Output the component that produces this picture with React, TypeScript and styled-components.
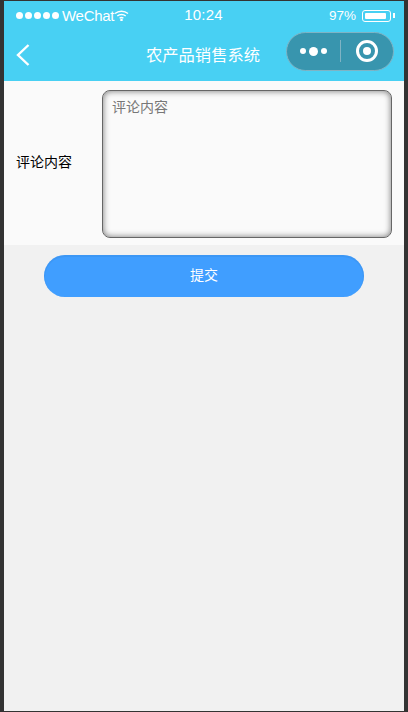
import styled, { createGlobalStyle } from 'styled-components';

const GlobalStyle = createGlobalStyle`
  html, body {
    margin: 0;
    padding: 0;
    height: 100%;
    background: #333333;
  }

  #root {
    height: 100%;
  }

  * {
    box-sizing: border-box;
  }
`;

const Frame = styled.div`
  width: 408px;
  height: 712px;
  padding: 1px 4px 1px 4px;
  background: #333333;
  font-family: "Liberation Sans", "Noto Sans CJK SC", sans-serif;
`;

const Phone = styled.div`
  height: 100%;
  display: flex;
  flex-direction: column;
  background: #f1f1f1;
`;

const Header = styled.div`
  height: 80px;
  background: #48d0f3;
  color: #fff;
  display: flex;
  flex-direction: column;
`;

const StatusBar = styled.div`
  height: 29px;
  padding: 0 9px 0 12px;
  display: flex;
  align-items: center;
  justify-content: space-between;
  font-size: 14px;
`;

const Side = styled.div`
  width: 130px;
  display: flex;
  align-items: center;
`;

const RightSide = styled(Side)`
  justify-content: flex-end;
  gap: 6px;
  padding-right: 4px;
`;

const Dots = styled.div`
  display: flex;
  gap: 2px;
  margin-right: 3px;
`;

const Dot = styled.span`
  width: 7px;
  height: 7px;
  border-radius: 50%;
  background: #fff;
`;

const Carrier = styled.span`
  font-size: 15px;
  letter-spacing: -0.3px;
`;

const Clock = styled.span`
  font-size: 15px;
  letter-spacing: 0.2px;
  margin: -2px 4px 0 0;
`;

const Percent = styled.span`
  font-size: 13.5px;
`;

const Battery = styled.div`
  width: 29px;
  height: 12px;
  padding: 2px;
  border: 1px solid #fff;
  border-radius: 3px;
  position: relative;

  &::before {
    content: '';
    display: block;
    height: 100%;
    width: 93%;
    background: #fff;
    border-radius: 1px;
  }

  &::after {
    content: '';
    position: absolute;
    top: 2px;
    right: -5px;
    width: 2px;
    height: 5px;
    background: #fff;
  }
`;

const NavBar = styled.div`
  flex: 1;
  padding: 0 10px 9px 12px;
  display: flex;
  align-items: center;
  justify-content: space-between;
  position: relative;
`;

const BackButton = styled.svg`
  width: 14px;
  height: 24px;
  margin-top: 8px;
`;

const Title = styled.div`
  position: absolute;
  left: 0;
  right: 0;
  margin-top: 6px;
  padding-right: 2px;
  text-align: center;
  font-size: 16.3px;
  font-weight: 400;
`;

const Capsule = styled.div`
  width: 108px;
  height: 39px;
  border-radius: 20px;
  background: #3895ae;
  border: 1px solid #7fb3c4;
  display: flex;
  align-items: center;
`;

const CapsuleHalf = styled.div`
  flex: 1;
  display: flex;
  align-items: center;
  justify-content: center;
  gap: 3px;
`;

const CapsuleDot = styled.span<{ $big?: boolean }>`
  width: ${(p) => (p.$big ? 9 : 6)}px;
  height: ${(p) => (p.$big ? 9 : 6)}px;
  border-radius: 50%;
  background: #fff;
`;

const CapsuleDivider = styled.span`
  width: 1px;
  height: 22px;
  margin-left: 1px;
  background: #7fb3c4;
`;

const Target = styled.div`
  width: 22px;
  height: 22px;
  border-radius: 50%;
  border: 3px solid #fff;
  display: flex;
  align-items: center;
  justify-content: center;

  &::after {
    content: '';
    width: 8px;
    height: 8px;
    border-radius: 50%;
    background: #fff;
  }
`;

const FormRow = styled.div`
  height: 164px;
  padding: 9px 12px 7px 12px;
  background: #fafafa;
  display: flex;
  align-items: center;
`;

const Label = styled.label`
  width: 86px;
  margin-bottom: 6px;
  font-size: 14px;
  color: #000;
`;

const Comment = styled.textarea`
  flex: 1;
  height: 148px;
  padding: 7px 9px;
  border: 1px solid #666;
  border-radius: 8px;
  background: #fafafa;
  box-shadow: inset 0 0 6px 0 rgba(0, 0, 0, 0.55);
  font-family: inherit;
  font-size: 14px;
  line-height: 18px;
  resize: none;
  outline: none;

  &::placeholder {
    color: #777;
    opacity: 1;
  }
`;

const SubmitButton = styled.button`
  display: block;
  width: 320px;
  height: 42px;
  margin: 10px 0 0 40px;
  padding: 0 0 4px;
  border: none;
  border-radius: 21px;
  background: #409eff;
  box-shadow: inset 0 1px 0 1px rgba(56, 140, 230, 0.4);
  color: #fff;
  font-family: inherit;
  font-size: 14px;
`;

export default function App() {
  return (
    <>
      <GlobalStyle />
      <Frame>
        <Phone>
          <Header>
            <StatusBar>
              <Side>
                <Dots>
                  <Dot />
                  <Dot />
                  <Dot />
                  <Dot />
                  <Dot />
                </Dots>
                <Carrier>WeChat</Carrier>
                <svg width="15" height="11" viewBox="0 0 15 11" fill="none" stroke="#fff" strokeWidth="1.4">
                  <path d="M1 3.6C4.6 .4 10.4 .4 14 3.6" />
                  <path d="M3.3 6C5.6 4 9.4 4 11.7 6" />
                  <path d="M5.6 8.2C6.7 7.3 8.3 7.3 9.4 8.2" />
                  <circle cx="7.5" cy="10" r=".6" fill="#fff" />
                </svg>
              </Side>
              <Clock>10:24</Clock>
              <RightSide>
                <Percent>97%</Percent>
                <Battery />
              </RightSide>
            </StatusBar>
            <NavBar>
              <BackButton viewBox="0 0 14 24" fill="none" stroke="#fff" strokeWidth="2.4">
                <path d="M12.5 2 2 12l10.5 10" />
              </BackButton>
              <Title>农产品销售系统</Title>
              <Capsule>
                <CapsuleHalf>
                  <CapsuleDot />
                  <CapsuleDot $big />
                  <CapsuleDot />
                </CapsuleHalf>
                <CapsuleDivider />
                <CapsuleHalf>
                  <Target />
                </CapsuleHalf>
              </Capsule>
            </NavBar>
          </Header>
          <FormRow>
            <Label>评论内容</Label>
            <Comment placeholder="评论内容" />
          </FormRow>
          <SubmitButton>提交</SubmitButton>
        </Phone>
      </Frame>
    </>
  );
}
